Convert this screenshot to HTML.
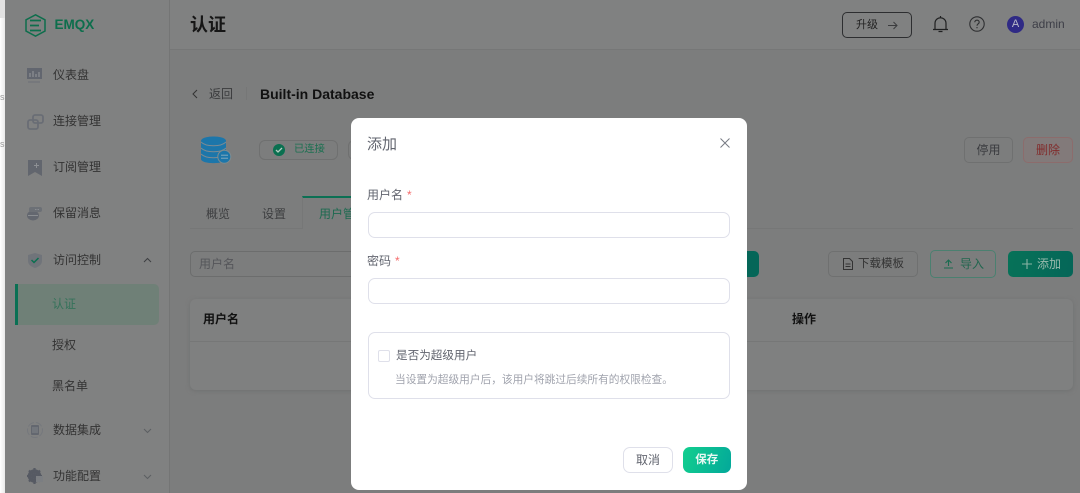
<!DOCTYPE html>
<html lang="zh"><head><meta charset="utf-8"><title>EMQX</title>
<style>
*{box-sizing:border-box;margin:0;padding:0}
html,body{width:1080px;height:493px;overflow:hidden;background:#fff}
body{font-family:"Liberation Sans","Noto Sans CJK SC",sans-serif;font-size:12px;color:#333}
#w{position:absolute;left:0;top:0;width:1080px;height:493px;filter:blur(.35px);overflow:hidden}
.a{position:absolute;white-space:nowrap}
svg{position:absolute;overflow:visible}
#strip{left:0;top:0;width:5px;height:493px;background:linear-gradient(90deg,#fff,#e9e9e9)}
#strip2{left:0;top:0;width:5px;height:18px;background:#e2e2e2}
#side{left:5px;top:0;width:165px;height:493px;background:#808181;border-right:1px solid #747575}
#main{left:170px;top:0;width:910px;height:493px;background:#7c7d7d}
#head{left:170px;top:0;width:910px;height:50px;background:#808181;border-bottom:1px solid #767777}
.m{font-size:12px;color:#333;left:53px;line-height:16px}
.btn{border:1px solid #6f7070;border-radius:5px;height:26px;line-height:24px;text-align:center;color:#333}
#modal{left:351px;top:118px;width:396px;height:372px;background:#fff;border-radius:8px}
.inp{left:368px;width:362px;height:26px;border:1px solid #dfe0ea;border-radius:7px;background:#fff}
.lab{font-size:12px;color:#62656f;left:367px;line-height:16px}
.lab b{color:#f56c6c;font-weight:400;margin-left:4px}
</style></head><body><div id="w">
<div class="a" id="strip"></div>
<div class="a" id="strip2"></div>
<div class="a" style="left:0;top:92px;font-size:9px;line-height:11px;color:#9a9a9a">s</div>
<div class="a" style="left:0;top:139px;font-size:9px;line-height:11px;color:#9a9a9a">s</div>
<div class="a" id="side"></div>
<div class="a" id="main"></div>
<div class="a" id="head"></div>

<svg style="left:25px;top:14px" width="21" height="23" viewBox="0 0 21 23" fill="none" stroke="#0d6e4c" stroke-width="1.500"><path d="M10.500 .8 20 5.800V17L10.500 22.200 1 17V5.800Z"/><path d="M5 6.500H16M5 11.500H14M5 16.500H16" stroke-width="1.700"/></svg>
<div class="a" style="left:54.500px;top:16px;font-size:13.500px;font-weight:700;color:#0d6e4c;line-height:18px">EMQX</div>

<svg style="left:27px;top:68px" width="16" height="15" viewBox="0 0 16 15"><rect width="15" height="11" fill="#62666f"/><path d="M3 9V5M6 9V3M9 9V6M12 9V4" stroke="#8a8d91" stroke-width="1.300"/><path d="M1 14H13" stroke="#6d7076"/></svg>
<div class="a m" style="top:67px">仪表盘</div>
<svg style="left:27px;top:114px" width="18" height="16" viewBox="0 0 18 16" fill="none" stroke="#696d75" stroke-width="1.800"><rect x="1" y="6" width="10" height="9" rx="2"/><rect x="6" y="1" width="10" height="8" rx="2"/></svg>
<div class="a m" style="top:113px">连接管理</div>
<svg style="left:28px;top:160px" width="15" height="16" viewBox="0 0 15 16"><path d="M0 0H14V16L7 12 0 16Z" fill="#62666e"/><path d="M8.500 3V8M6 5.500H11" stroke="#8d9094"/></svg>
<div class="a m" style="top:159px">订阅管理</div>
<svg style="left:27px;top:206px" width="16" height="15" viewBox="0 0 16 15"><ellipse cx="6" cy="9.500" rx="6" ry="5" fill="#63676f"/><rect x="2" y="1" width="13" height="5" rx="2" fill="#6c7076"/><path d="M1 9.500H11" stroke="#8a8d91"/><path d="M8 3.500H13" stroke="#8a8d91" stroke-dasharray="1.500 1"/></svg>
<div class="a m" style="top:205px">保留消息</div>
<svg style="left:28px;top:253px" width="14" height="15" viewBox="0 0 14 15"><path d="M7 0 14 2V8C14 12 10 14 7 15 4 14 0 12 0 8V2Z" fill="#70747a"/><path d="M3.500 7 6 9.500 10.500 5" fill="none" stroke="#0c7050" stroke-width="1.500"/></svg>
<div class="a m" style="top:252px">访问控制</div>
<svg style="left:143px;top:257px" width="9" height="6" viewBox="0 0 9 6" fill="none" stroke="#3d3f42"><path d="M1 5 4.500 1.500 8 5"/></svg>
<div class="a" style="left:15px;top:284px;width:144px;height:41px;background:#6f8077;border-radius:0 5px 5px 0;border-left:3px solid #0a7054"></div>
<div class="a m" style="left:52px;top:296px;color:#35725a">认证</div>
<div class="a m" style="left:52px;top:337px">授权</div>
<div class="a m" style="left:52px;top:378px">黑名单</div>
<svg style="left:27px;top:422px" width="16" height="16" viewBox="0 0 16 16" fill="none"><circle cx="8" cy="8" r="7.500" stroke="#75787d" stroke-dasharray="7 2"/><rect x="4" y="3" width="8" height="10" rx="1" fill="#63676f"/><path d="M5 6H11M5 8H11M5 10H11" stroke="#8b8e92" stroke-width=".8"/></svg>
<div class="a m" style="top:422px">数据集成</div>
<svg style="left:143px;top:428px" width="9" height="6" viewBox="0 0 9 6" fill="none" stroke="#5c5f62"><path d="M1 1 4.500 4.500 8 1"/></svg>
<svg style="left:27px;top:468px" width="16" height="16" viewBox="0 0 16 16"><circle cx="7.500" cy="8" r="5" fill="none" stroke="#565a63" stroke-width="3.500"/><path d="M7.500 0V16M0 8H15M2 2.500 13 13.500M13 2.500 2 13.500" stroke="#565a63" stroke-width="2.200"/><rect x="9" y="8" width="7" height="6" fill="#7b7e82"/></svg>
<div class="a m" style="top:468px">功能配置</div>
<svg style="left:143px;top:474px" width="9" height="6" viewBox="0 0 9 6" fill="none" stroke="#5c5f62"><path d="M1 1 4.500 4.500 8 1"/></svg>

<div class="a" style="left:190px;top:13px;font-size:18px;font-weight:700;line-height:24px;color:#161616">认证</div>
<div class="a btn" style="left:842px;top:12px;width:70px;border-color:#2d2e30;color:#222;font-size:11px;text-align:left;padding-left:13px">升级</div>
<svg style="left:888px;top:21px" width="10" height="9" viewBox="0 0 10 9" fill="none" stroke="#3b3c3e"><path d="M0 4.500H9M5.500 1 9 4.500 5.500 8"/></svg>
<svg style="left:933px;top:16px" width="15" height="17" viewBox="0 0 15 17" fill="none" stroke="#1f2021" stroke-width="1.200"><path d="M2 13V7.500C2 4 4.500 1.800 7.500 1.800S13 4 13 7.500V13M0 13.500H15M5.500 15.500H9.500"/><path d="M7.500 0V2"/></svg>
<svg style="left:969px;top:16px" width="16" height="16" viewBox="0 0 16 16" fill="none" stroke="#2e2f31" stroke-width="1.100"><circle cx="8" cy="8" r="7.200"/><path d="M5.800 6.200C5.800 3.500 10.200 3.500 10.200 6.200 10.200 7.800 8 7.800 8 9.700M8 11V12.200"/></svg>
<div class="a" style="left:1007px;top:16px;width:17px;height:17px;border-radius:50%;background:#2f2a85;color:#b9b9c9;font-size:11px;line-height:17px;text-align:center">A</div>
<div class="a" style="left:1032px;top:16px;font-size:12px;line-height:16px;color:#3d3e47">admin</div>

<svg style="left:192px;top:89px" width="6" height="10" viewBox="0 0 6 10" fill="none" stroke="#333"><path d="M5 1 1 5 5 9"/></svg>
<div class="a" style="left:209px;top:86px;line-height:16px;color:#3a3b3d">返回</div>
<div class="a" style="left:246px;top:87px;width:1px;height:13px;background:#767777"></div>
<div class="a" style="left:260px;top:85px;font-size:14px;font-weight:700;line-height:18px;color:#111">Built-in Database</div>

<svg style="left:200px;top:135px" width="31" height="30" viewBox="0 0 31 30"><path d="M1 6C1 0 26 0 26 6V24C26 29.500 1 29.500 1 24Z" fill="#1c76aa"/><path d="M1 7C6 12 21 12 26 7M1 13C6 18 21 18 26 13M1 19C6 24 21 24 26 19" fill="none" stroke="#7c8b93" stroke-width=".9"/><circle cx="24.300" cy="21.700" r="6.500" fill="#1c76aa" stroke="#7f8c90"/><path d="M21 20.200H28M21 23.200H28" stroke="#8fb0bf" stroke-width=".9"/></svg>
<div class="a" style="left:259px;top:140px;width:79px;height:20px;border:1px solid #6f7070;border-radius:6px"></div>
<div class="a" style="left:273px;top:144px;width:12px;height:12px;border-radius:50%;background:#0a7050"></div>
<svg style="left:275px;top:147px" width="8" height="6" viewBox="0 0 8 6" fill="none" stroke="#b5cdc3" stroke-width="1.300"><path d="M1 3 3 5 7 1"/></svg>
<div class="a" style="left:294px;top:143px;font-size:10.300px;line-height:14px;color:#1a7050">已连接</div>
<div class="a" style="left:348px;top:140px;width:8px;height:20px;border:1px solid #6f7070;border-radius:6px 0 0 6px"></div>
<div class="a btn" style="left:964px;top:137px;width:49px;color:#3a3b3f">停用</div>
<div class="a btn" style="left:1023px;top:137px;width:50px;color:#812c2c;border-color:#8c6c6c;background:#827a7a">删除</div>

<div class="a" style="left:190px;top:228px;width:883px;height:1px;background:#767777"></div>
<div class="a" style="left:206px;top:206px;line-height:16px;color:#3d3e40">概览</div>
<div class="a" style="left:262px;top:206px;line-height:16px;color:#3d3e40">设置</div>
<div class="a" style="left:302px;top:196px;width:60px;height:33px;border-top:2px solid #0c7054;border-left:1px solid #767777;background:#7c7d7d"></div>
<div class="a" style="left:319px;top:206px;line-height:16px;color:#1d6a50">用户管理</div>

<div class="a" style="left:190px;top:251px;width:200px;height:26px;border:1px solid #6c6d6d;border-radius:5px"></div>
<div class="a" style="left:199px;top:256px;line-height:16px;color:#55565a">用户名</div>
<div class="a" style="left:730px;top:251px;width:29px;height:26px;border-radius:0 5px 5px 0;background:#056658"></div>
<div class="a btn" style="left:828px;top:251px;width:90px;font-size:11.500px;text-align:left;padding-left:29px">下载模板</div>
<svg style="left:843px;top:258px" width="10" height="12" viewBox="0 0 10 12" fill="none" stroke="#333"><path d="M.5.500H6.500L9.500 3.500V11.500H.5ZM2.500 6H7.500M2.500 8.500H7.500"/></svg>
<div class="a btn" style="left:930px;top:250px;width:66px;height:28px;line-height:26px;border-color:#4b8070;color:#22664f;text-align:left;padding-left:29px">导入</div>
<svg style="left:944px;top:259px" width="9" height="10" viewBox="0 0 9 10" fill="none" stroke="#1a6c50" stroke-width="1.100"><path d="M4.500 7V1M1.500 4 4.500 1 7.500 4M0 9H9"/></svg>
<div class="a btn" style="left:1008px;top:251px;width:65px;border:0;background:linear-gradient(100deg,#067258,#056658);color:#99baad;text-align:left;padding-left:29px;line-height:26px">添加</div>
<svg style="left:1022px;top:259px" width="10" height="10" viewBox="0 0 10 10" stroke="#8ab4a4" stroke-width="1.100"><path d="M5 0V10M0 5H10"/></svg>

<div class="a" style="left:190px;top:299px;width:883px;height:91px;background:#7f8080;border-radius:6px;box-shadow:0 1px 4px #707171"></div>
<div class="a" style="left:190px;top:341px;width:883px;height:1px;background:#767777"></div>
<div class="a" style="left:203px;top:311px;font-weight:700;line-height:16px;color:#111">用户名</div>
<div class="a" style="left:792px;top:311px;font-weight:700;line-height:16px;color:#111">操作</div>

<div class="a" id="modal"></div>
<div class="a" style="left:367px;top:134.500px;font-size:15px;line-height:20px;color:#62656f">添加</div>
<svg style="left:720px;top:138px" width="10" height="10" viewBox="0 0 10 10" stroke="#777a84"><path d="M.5.500 9.500 9.500M9.500.500 .5 9.500"/></svg>
<div class="a lab" style="top:187px">用户名<b>*</b></div>
<div class="a inp" style="top:212px"></div>
<div class="a lab" style="top:253px">密码<b>*</b></div>
<div class="a inp" style="top:278px"></div>
<div class="a inp" style="top:332px;height:67px"></div>
<div class="a" style="left:378px;top:350px;width:12px;height:12px;border:1px solid #dfe0ea;border-radius:2px"></div>
<div class="a" style="left:396px;top:348px;line-height:16px;font-size:11.600px;color:#62656f">是否为超级用户</div>
<div class="a" style="left:395px;top:372.500px;line-height:15px;font-size:10.700px;color:#a0a3ad">当设置为超级用户后，该用户将跳过后续所有的权限检查。</div>
<div class="a" style="left:623px;top:447px;width:50px;height:26px;border:1px solid #dfe0ea;border-radius:7px;text-align:center;line-height:24px;color:#62656f">取消</div>
<div class="a" style="left:683px;top:447px;width:47.500px;height:26px;border-radius:7px;text-align:center;line-height:26px;color:#e8f8f3;background:linear-gradient(110deg,#12cf8e,#03a89a);font-weight:700;font-size:11.500px">保存</div>
</div></body></html>
